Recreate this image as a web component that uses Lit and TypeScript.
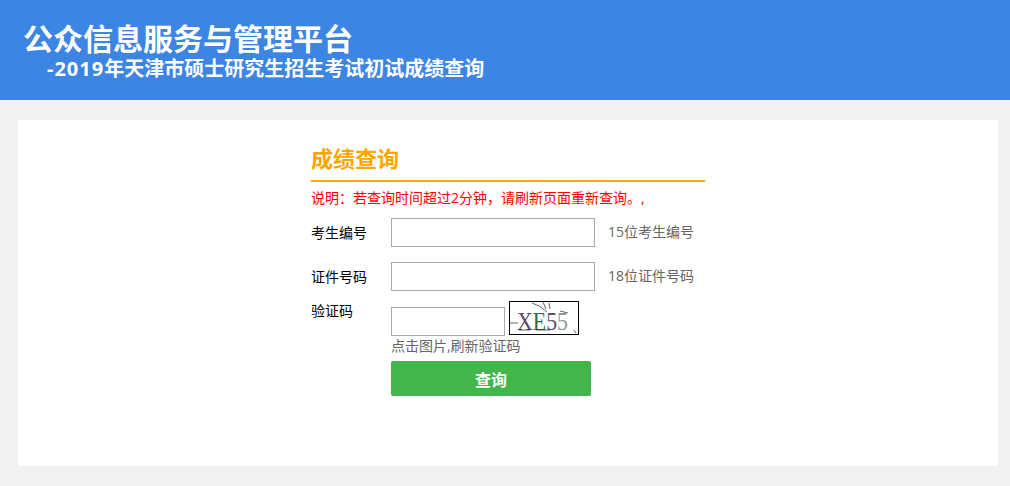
import { LitElement, html, css, svg } from "lit";
import { customElement } from "lit/decorators.js";

@customElement("app-root")
export class AppRoot extends LitElement {
  static styles = css`
    :host { display: block; width: 1010px; height: 486px; overflow: hidden; background: #f1f1f1;
      font-family: "Open Sans", "Noto Sans CJK SC", sans-serif; font-size: 14px; color: #000; }
    header { height: 100px; box-sizing: border-box; background: #3d85e3; color: #fff; padding: 20px 0 0 23px; font-weight: 700; }
    .t1 { font-size: 30px; line-height: 38px; height: 36px; }
    .t2 { font-size: 20px; line-height: 26px; padding-left: 24px; }
    .num { letter-spacing: 1px; }
    .card { margin: 20px 12px 0 18px; height: 346px; background: #fff; box-sizing: border-box; padding: 23px 0 0 293px; }
    .panel { width: 394px; }
    h2 { margin: 0; height: 37px; line-height: 30px; font-size: 22px; font-weight: 700; color: #ffa500; border-bottom: 2px solid #ffa500; }
    .note { color: #f00; line-height: 20px; margin-top: 6px; height: 30px; white-space: nowrap; }
    .row { display: grid; grid-template-columns: 80px 204px auto; align-items: center; height: 29px; margin-bottom: 15px; }
    .row label { padding-bottom: 2px; }
    .row .hint { margin-left: 13px; padding-bottom: 4px; white-space: nowrap; }
    input { box-sizing: border-box; width: 100%; height: 29px; margin: 0; padding: 0 4px; border: 1px solid #a9a9a9; background: #fff; outline: none; border-radius: 0; }
    .hint { color: #666; }
    .captcha { display: grid; grid-template-columns: 80px auto; margin-top: -5px; }
    .captcha label { line-height: 20px; }
    .cap-line { display: flex; align-items: flex-end; gap: 4px; }
    .cap-line input { width: 114px; margin-bottom: -1px; }
    svg { display: block; width: 70px; height: 34px; box-sizing: border-box; border: 1px solid #000; }
    .refresh { color: #666; line-height: 20px; margin-top: 1px; }
    button { display: block; width: 200px; height: 35px; margin-top: 5px; padding: 0; border: 0; border-radius: 2px; background: #43b649; color: #fff; font: 700 16px "Open Sans", "Noto Sans CJK SC", sans-serif; }
  `;

  private captcha() {
    return svg`<svg viewBox="0 0 68 32" aria-label="验证码">
      <rect width="68" height="32" fill="#fff"/>
      <text x="7" y="28" font-family="Liberation Serif" font-size="26" textLength="51" lengthAdjust="spacingAndGlyphs"><tspan fill="#5d4a68">X</tspan><tspan fill="#2f6b3a">E</tspan><tspan fill="#56516e">5</tspan><tspan fill="#8c9a96">5</tspan></text>
      <path d="M0 21H8M22 1Q30 3 37 10M33 0L36 7M39 1L40 7M9 28H20M26 28H40M64 28L66 31M50 9L58 11" stroke="#222" stroke-width=".7" fill="none"/>
    </svg>`;
  }

  render() {
    return html`
      <header>
        <div class="t1">公众信息服务与管理平台</div>
        <div class="t2"><span class="num">-2019</span>年天津市硕士研究生招生考试初试成绩查询</div>
      </header>
      <section class="card">
        <div class="panel">
          <h2>成绩查询</h2>
          <div class="note">说明：若查询时间超过2分钟，请刷新页面重新查询。,</div>
          <div class="row"><label>考生编号</label><input /><span class="hint">15位考生编号</span></div>
          <div class="row"><label>证件号码</label><input /><span class="hint">18位证件号码</span></div>
          <div class="captcha">
            <label>验证码</label>
            <div>
              <div class="cap-line"><input />${this.captcha()}</div>
              <div class="refresh">点击图片,刷新验证码</div>
              <button>查询</button>
            </div>
          </div>
        </div>
      </section>
    `;
  }
}
